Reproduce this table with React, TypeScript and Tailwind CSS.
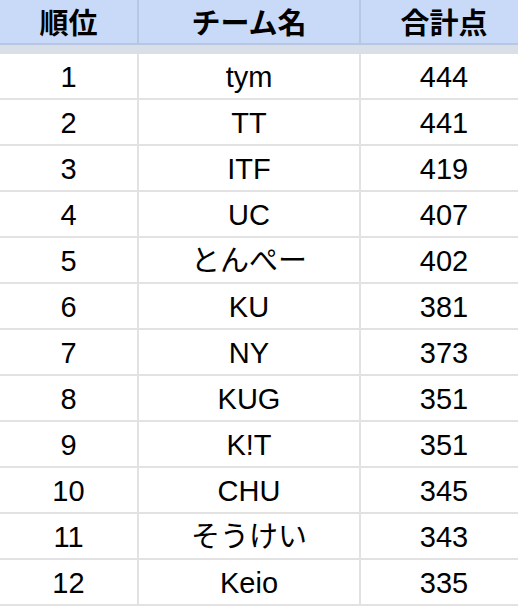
const rows: [string, string, string][] = [
  ["1", "tym", "444"],
  ["2", "TT", "441"],
  ["3", "ITF", "419"],
  ["4", "UC", "407"],
  ["5", "とんぺー", "402"],
  ["6", "KU", "381"],
  ["7", "NY", "373"],
  ["8", "KUG", "351"],
  ["9", "K!T", "351"],
  ["10", "CHU", "345"],
  ["11", "そうけい", "343"],
  ["12", "Keio", "335"],
];

const font = "font-['Liberation_Sans','Noto_Sans_CJK_JP',sans-serif]";

export default function App() {
  return (
    <div className={`w-[518px] h-[607px] overflow-hidden bg-white text-black ${font}`}>
      {/* sheet is wider than the window; last column runs off the right edge */}
      <div className="w-[527px]">
        <div className="flex h-[45px] bg-[#c9daf8] border-b-2 border-[#b6c6e3] font-bold text-[29px] font-['Noto_Sans_CJK_JP',sans-serif]">
          <div className="w-[139px] border-r-2 border-[#b6c6e3] flex items-center justify-center">
            順位
          </div>
          <div className="w-[222px] border-r-2 border-[#b6c6e3] flex items-center justify-center">
            チーム名
          </div>
          <div className="flex-1 flex items-center justify-center">合計点</div>
        </div>
        <div className="h-[9px] bg-[#dadee7]" />
        {rows.map(([rank, team, score]) => (
          <div key={rank} className="flex h-[46px] border-b-2 border-[#e2e2e2] text-[29px]">
            <div className="w-[139px] pt-1 border-r-2 border-[#e2e2e2] flex items-center justify-center">
              {rank}
            </div>
            <div className="w-[222px] pt-1 border-r-2 border-[#e2e2e2] flex items-center justify-center">
              {team}
            </div>
            <div className="flex-1 pt-1 flex items-center justify-center">{score}</div>
          </div>
        ))}
      </div>
    </div>
  );
}
